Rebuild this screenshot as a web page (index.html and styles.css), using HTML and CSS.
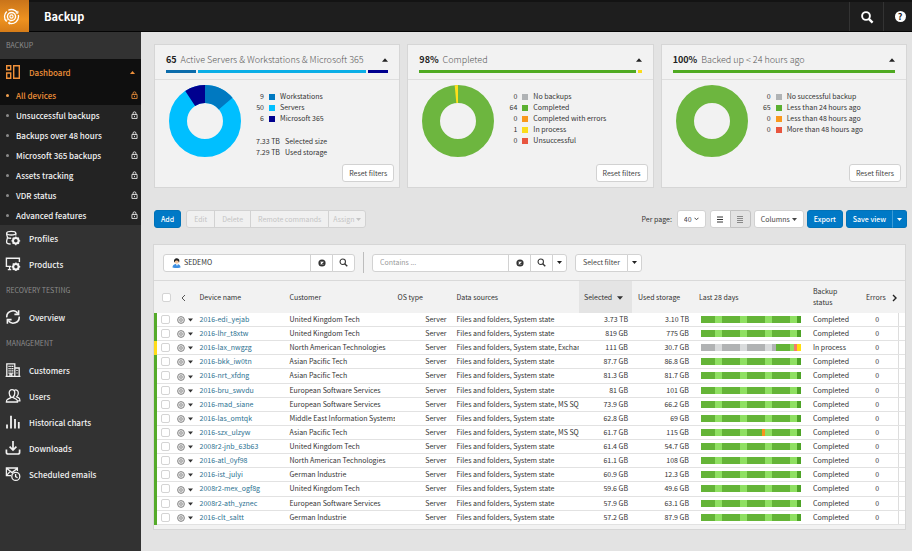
FILE: index.html
```html
<!DOCTYPE html>
<html lang="en">
<head>
<meta charset="UTF-8">
<meta name="viewport" content="width=device-width, initial-scale=1.0">
<title>Backup</title>
<link rel="stylesheet" href="styles.css">
</head>
<body>

<!-- Shared icons -->
<svg class="sprite" aria-hidden="true">
    <symbol id="lock" viewBox="0 0 12 14"><path d="M1.5 6h9v7h-9zM3.5 6V4a2.5 2.5 0 0 1 5 0v2M6 8.3v2.4" fill="none" stroke="currentColor" stroke-width="1.5"/></symbol>
    <symbol id="search" viewBox="0 0 12 12"><circle cx="5" cy="5" r="3.6" fill="none" stroke="currentColor" stroke-width="1.4"/><path d="M7.6 7.6l3.4 3.4" stroke="currentColor" stroke-width="1.8"/></symbol>
    <symbol id="clear" viewBox="0 0 12 12"><circle cx="6" cy="6" r="5.4" fill="currentColor"/><path d="M4 4l4 4M8 4l-4 4" stroke="#fff" stroke-width="1.7"/></symbol>
    <symbol id="down" viewBox="0 0 10 6"><path d="M0 0h10L5 6z" fill="currentColor"/></symbol>
    <symbol id="up" viewBox="0 0 10 6"><path d="M0 6h10L5 0z" fill="currentColor"/></symbol>
    <symbol id="gear" viewBox="0 0 16 16"><circle cx="8" cy="8" r="6.8" fill="#e4e4e4" stroke="#888" stroke-width="2"/><circle cx="8" cy="8" r="2.8" fill="#ccc" stroke="#999" stroke-width="1.6"/></symbol>
</svg>

<header class="topbar">
    <a class="logo" href="#" aria-label="Home">
        <svg viewBox="0 0 18 18" width="17" height="17" fill="none" stroke="#fff">
            <path d="M3.2 13.6A7.4 7.4 0 0 1 4 3.6M5.6 2.4A7.4 7.4 0 0 1 15.2 5M16.2 7.4A7.4 7.4 0 0 1 6 15.8" stroke-width="1.4"/>
            <path d="M1.6 12.2l1.9 2.2 1-2.6M13.4 5.2l2.5.4-.2-2.6M7.6 17.4l-2-1.6 2.2-1.3" stroke-width="1"/>
            <circle cx="9" cy="9" r="4.3" stroke-width="1.5"/>
            <circle cx="9" cy="9" r="1.7" stroke-width="1.2"/>
        </svg>
    </a>
    <h1>Backup</h1>
    <button class="top-button" aria-label="Search">
        <svg width="14" height="14" viewBox="0 0 14 14" fill="none" stroke="#fff"><circle cx="6" cy="6" r="3.9" stroke-width="1.9"/><path d="M8.8 8.8l3.8 3.8" stroke-width="2.4"/></svg>
    </button>
    <button class="top-button" aria-label="Help"><span class="help">?</span></button>
</header>

<div class="page">

<!-- Sidebar -->
<nav class="sidebar">
    <h2>BACKUP</h2>
    <div class="nav-open">
        <a class="nav-item" href="#">
            <svg width="16" height="16" viewBox="0 0 16 16" fill="none" stroke="currentColor" stroke-width="1.4"><path d="M1.7 1.7h4v4h-4zM1.7 9h4v5.3h-4zM8.7 1.7h5.6v12.6H8.7z"/></svg>
            <span>Dashboard</span>
            <svg class="nav-caret" width="5" height="3"><use href="#up"/></svg>
        </a>
        <a class="sub-item" href="#"><span>All devices</span><svg width="7" height="8"><use href="#lock"/></svg></a>
    </div>
    <div class="nav-sub">
        <a class="sub-item" href="#"><span>Unsuccessful backups</span><svg width="7" height="8"><use href="#lock"/></svg></a>
        <a class="sub-item" href="#"><span>Backups over 48 hours</span><svg width="7" height="8"><use href="#lock"/></svg></a>
        <a class="sub-item" href="#"><span>Microsoft 365 backups</span><svg width="7" height="8"><use href="#lock"/></svg></a>
        <a class="sub-item" href="#"><span>Assets tracking</span><svg width="7" height="8"><use href="#lock"/></svg></a>
        <a class="sub-item" href="#"><span>VDR status</span><svg width="7" height="8"><use href="#lock"/></svg></a>
        <a class="sub-item" href="#"><span>Advanced features</span><svg width="7" height="8"><use href="#lock"/></svg></a>
    </div>
    <a class="nav-item" href="#">
        <svg width="16" height="16" viewBox="0 0 16 16" fill="none" stroke="currentColor" stroke-width="1.3"><ellipse cx="6.2" cy="3.2" rx="4.6" ry="1.8"/><path d="M1.6 3.2c0 2.4.8 2.6.8 4.2S1.6 9.6 1.6 12c0 1.4 2 2 4 2M10.8 3.2v2.4M2.2 7.2c1 .9 2.4 1.2 4 1"/><circle cx="10.8" cy="10.8" r="2.8" stroke-width="2"/><path d="M10.8 6.4v1.4M10.8 13.8v1.4M6.4 10.8h1.4M13.8 10.8h1.4M7.7 7.7l1 1M12.9 12.9l1 1M7.7 13.9l1-1M12.9 8.7l1-1"/></svg>
        <span>Profiles</span>
    </a>
    <a class="nav-item" href="#">
        <svg width="16" height="16" viewBox="0 0 16 16" fill="none" stroke="currentColor" stroke-width="1.4"><path d="M6 10.4H1.4V2.2h13V6M2.8 13.6h3.4M4.6 10.6v3"/><circle cx="10.9" cy="10.7" r="2.7" stroke-width="2"/><path d="M10.9 6.4v1.4M10.9 13.6V15M6.6 10.7H8M13.8 10.7h1.4M7.8 7.6l1 1M13 12.8l1 1M7.8 13.8l1-1M13 8.6l1-1"/></svg>
        <span>Products</span>
    </a>
    <h2>RECOVERY TESTING</h2>
    <a class="nav-item" href="#">
        <svg width="16" height="16" viewBox="0 0 16 16" fill="none" stroke="currentColor" stroke-width="1.6"><path d="M1.8 8.4A6 6 0 0 1 12.8 4.6M14.2 7.6A6 6 0 0 1 3.2 11.4"/><path d="M13.6 1.2v4.2H9.4M2.4 14.8v-4.2h4.2"/></svg>
        <span>Overview</span>
    </a>
    <h2>MANAGEMENT</h2>
    <a class="nav-item" href="#">
        <svg width="16" height="16" viewBox="0 0 16 16" fill="none" stroke="currentColor" stroke-width="1.3"><path d="M1.8 14V1.8h8V14M9.8 6h4.4v8M.6 14.3h14.8"/><path d="M3.4 4.3h5M3.4 6.6h5M3.4 8.9h5M3.4 11.2h5" stroke-dasharray="1.4 .4"/><path d="M12 8v1M12 10.4v1M5 14v-2h1.8v2"/></svg>
        <span>Customers</span>
    </a>
    <a class="nav-item" href="#">
        <svg width="16" height="16" viewBox="0 0 16 16" fill="none" stroke="currentColor" stroke-width="1.3"><path d="M6.3 9.4C4.6 8.2 4.2 6.6 4.2 5c0-2 1-3.4 2.8-3.4S9.8 3 9.8 5c0 1.6-.4 3.2-2.1 4.4l3.6 1.9c.9.5 1.2 1.3 1.2 2.7H1.4c0-1.4.3-2.2 1.2-2.7zM9.6 2.1c2.2-.8 3.7.6 3.7 2.9 0 1.6-.5 2.9-1.6 3.8l2 1.1c.9.5 1.2 1.4 1.2 2.9h-2"/></svg>
        <span>Users</span>
    </a>
    <a class="nav-item" href="#">
        <svg width="16" height="16" viewBox="0 0 16 16" fill="none" stroke="currentColor" stroke-width="1.8"><path d="M2 14.4v-4M6 14.4V1.8M10 14.4V5M13.8 14.4V8"/></svg>
        <span>Historical charts</span>
    </a>
    <a class="nav-item" href="#">
        <svg width="16" height="16" viewBox="0 0 16 16" fill="none" stroke="currentColor" stroke-width="1.7"><path d="M8 1v8.6M4.6 6.600L8 10l3.4-3.4M1.4 9.6v2.6c0 1.2.6 1.8 1.8 1.8h9.6c1.2 0 1.8-.6 1.8-1.8V9.6"/></svg>
        <span>Downloads</span>
    </a>
    <a class="nav-item" href="#">
        <svg width="16" height="16" viewBox="0 0 16 16" fill="none" stroke="currentColor" stroke-width="1.3"><path d="M6 9.6H1.4V2h11v3M1.6 2.2L7 6.6l5.2-4.2M1.6 9.4l3.6-4"/><circle cx="10.8" cy="10.4" r="4"/><path d="M10.6 8v2.6l2 1.2"/></svg>
        <span>Scheduled emails</span>
    </a>
</nav>

<main>

    <!-- Summary cards -->
    <section class="cards">
        <article class="card">
            <div class="card-head">
                <h3><b>65</b> Active Servers &amp; Workstations &amp; Microsoft 365</h3>
                <button class="collapse" aria-label="Collapse"><svg width="6" height="4"><use href="#up"/></svg></button>
                <div class="share">
                    <i class="work-dark" style="flex-grow: 30"></i><i class="serv-dark" style="flex-grow: 169"></i><i class="ms" style="flex-grow: 20"></i>
                </div>
            </div>
            <div class="card-body">
                <svg class="donut" viewBox="0 0 72 72" width="72" height="72">
                    <circle cx="36" cy="36" r="27" pathLength="65" stroke="#00bfff"/>
                    <circle cx="36" cy="36" r="27" pathLength="65" stroke="#0079c1" stroke-dasharray="9 56"/>
                    <circle cx="36" cy="36" r="27" pathLength="65" stroke="#00008f" stroke-dasharray="6 59" stroke-dashoffset="-59"/>
                </svg>
                <div>
                    <ul class="legend">
                        <li><b>9</b><i class="work"></i>Workstations</li>
                        <li><b>50</b><i class="serv"></i>Servers</li>
                        <li><b>6</b><i class="ms"></i>Microsoft 365</li>
                    </ul>
                    <ul class="sizes">
                        <li><b>7.33 TB</b>Selected size</li>
                        <li><b>7.29 TB</b>Used storage</li>
                    </ul>
                </div>
            </div>
            <button class="btn reset">Reset filters</button>
        </article>

        <article class="card">
            <div class="card-head">
                <h3><b>98%</b> Completed</h3>
                <button class="collapse" aria-label="Collapse"><svg width="6" height="4"><use href="#up"/></svg></button>
                <div class="share">
                    <i class="ok-dark" style="flex-grow: 218"></i><i class="proc" style="flex-grow: 4"></i>
                </div>
            </div>
            <div class="card-body">
                <svg class="donut" viewBox="0 0 72 72" width="72" height="72">
                    <circle cx="36" cy="36" r="27" pathLength="65" stroke="#6db63f"/>
                    <circle cx="36" cy="36" r="27" pathLength="65" stroke="#ffe01a" stroke-dasharray="1 64" stroke-dashoffset="-64"/>
                </svg>
                <ul class="legend">
                    <li><b>0</b><i class="none"></i>No backups</li>
                    <li><b>64</b><i class="ok"></i>Completed</li>
                    <li><b>0</b><i class="warn"></i>Completed with errors</li>
                    <li><b>1</b><i class="proc"></i>In process</li>
                    <li><b>0</b><i class="fail"></i>Unsuccessful</li>
                </ul>
            </div>
            <button class="btn reset">Reset filters</button>
        </article>

        <article class="card">
            <div class="card-head">
                <h3><b>100%</b> Backed up &lt; 24 hours ago</h3>
                <button class="collapse" aria-label="Collapse"><svg width="6" height="4"><use href="#up"/></svg></button>
                <div class="share"><i class="ok-dark" style="flex-grow: 1"></i></div>
            </div>
            <div class="card-body">
                <svg class="donut" viewBox="0 0 72 72" width="72" height="72">
                    <circle cx="36" cy="36" r="27" stroke="#6db63f"/>
                </svg>
                <ul class="legend">
                    <li><b>0</b><i class="none"></i>No successful backup</li>
                    <li><b>65</b><i class="ok"></i>Less than 24 hours ago</li>
                    <li><b>0</b><i class="warn"></i>Less than 48 hours ago</li>
                    <li><b>0</b><i class="fail"></i>More than 48 hours ago</li>
                </ul>
            </div>
            <button class="btn reset">Reset filters</button>
        </article>
    </section>

    <!-- Toolbar -->
    <section class="toolbar">
        <button class="btn primary">Add</button>
        <div class="group actions">
            <button class="btn" disabled>Edit</button>
            <button class="btn" disabled>Delete</button>
            <button class="btn" disabled>Remote commands</button>
            <button class="btn assign" disabled>Assign <svg width="5" height="3"><use href="#down"/></svg></button>
        </div>
        <label class="per-label" for="perPage">Per page:</label>
        <div class="btn per-page">
            <select id="perPage"><option>40</option></select>
            <svg width="5" height="4" viewBox="0 0 10 8"><path d="M1 1.5l4 4 4-4" fill="none" stroke="currentColor" stroke-width="2"/></svg>
        </div>
        <div class="group">
            <button class="btn view" aria-label="List view"><svg width="6" height="7" viewBox="0 0 6 7"><path d="M0 1h6M0 3.5h6M0 6h6" stroke="#333"/></svg></button>
            <button class="btn view active" aria-label="Compact view"><svg width="6" height="7" viewBox="0 0 6 7"><path d="M0 .5h6M0 2.5h6M0 4.5h6M0 6.5h6" stroke="#888"/></svg></button>
        </div>
        <button class="btn columns">Columns <svg width="5" height="3"><use href="#down"/></svg></button>
        <button class="btn primary">Export</button>
        <div class="group">
            <button class="btn primary">Save view</button>
            <button class="btn primary arrow" aria-label="More save options"><svg width="5" height="3"><use href="#down"/></svg></button>
        </div>
    </section>

    <!-- Device list -->
    <section class="panel">
        <div class="filters">
            <div class="group">
                <div class="field">
                    <svg width="9" height="10" viewBox="0 0 18 20"><circle cx="9.5" cy="7" r="4.5" fill="#f6c9a2"/><path d="M4 8C3 2 7 0 10 .5c4 .3 6 4 4 9-.5-3-2-4-4-4.5C7 5 6 6 5 9z" fill="#222"/><path d="M1 19c0-4 2-6 6-7h4c4 1 6 3 6 7-4 1.5-12 1.5-16 0z" fill="#3f8fe0"/><path d="M8 12h4l-2 4z" fill="#fff"/></svg>
                    <input type="text" aria-label="Partner" value="SEDEMO">
                </div>
                <button class="btn icon" aria-label="Clear partner"><svg width="8" height="8"><use href="#clear"/></svg></button>
                <button class="btn icon" aria-label="Find partner"><svg width="9" height="9"><use href="#search"/></svg></button>
            </div>
            <div class="divider"></div>
            <div class="group">
                <div class="field contains">
                    <input type="text" aria-label="Contains" placeholder="Contains ...">
                </div>
                <button class="btn icon" aria-label="Clear search"><svg width="8" height="8"><use href="#clear"/></svg></button>
                <button class="btn icon" aria-label="Search devices"><svg width="9" height="9"><use href="#search"/></svg></button>
                <button class="btn arrow" aria-label="Search options"><svg width="5" height="3"><use href="#down"/></svg></button>
            </div>
            <div class="group select-filter">
                <button class="btn">Select filter</button>
                <button class="btn arrow" aria-label="Filter list"><svg width="5" height="3"><use href="#down"/></svg></button>
            </div>
        </div>

        <table>
            <colgroup>
                <col class="c-check"><col class="c-gear"><col class="c-name"><col class="c-customer"><col class="c-os"><col>
                <col class="c-selected"><col class="c-used"><col class="c-days"><col class="c-status"><col class="c-errors"><col class="c-end">
            </colgroup>
            <thead>
                <tr>
                    <th class="check"><input type="checkbox" aria-label="Select all"></th>
                    <th class="gear"><svg width="5" height="8" viewBox="0 0 5 8"><path d="M4 1L1 4l3 3" fill="none" stroke="#555"/></svg></th>
                    <th>Device name</th>
                    <th>Customer</th>
                    <th>OS type</th>
                    <th class="sources">Data sources</th>
                    <th class="sorted">Selected <svg width="6" height="4"><use href="#down"/></svg></th>
                    <th class="used">Used storage</th>
                    <th class="days">Last 28 days</th>
                    <th class="status">Backup status</th>
                    <th class="errors" colspan="2">Errors <svg width="5" height="8" viewBox="0 0 5 8"><path d="M1 1l3 3-3 3" fill="none" stroke="#222" stroke-width="1.4"/></svg></th>
                </tr>
            </thead>
            <tbody id="devices"></tbody>
        </table>
    </section>

</main>
</div>

<script>
    // g/l = completed (weekday/weekend), d = today, n/m = no backup, w = with errors, f = failed, p = in process
    const normal = [['g', 4], ['l', 2], ['g', 5], ['l', 2], ['g', 5], ['l', 2], ['g', 5], ['l', 2], ['d', 1]];
    const started = [['n', 4], ['m', 2], ['n', 5], ['m', 2], ['n', 5], ['m', 2], ['n', 1], ['g', 4], ['l', 1], ['f', 1], ['p', 1]];
    const warned = [['g', 4], ['l', 2], ['g', 5], ['l', 2], ['g', 4], ['w', 1], ['l', 2], ['g', 5], ['l', 2], ['d', 1]];
    const files = 'Files and folders, System state';

    const devices = [
        ['2016-edi_yejab', 'United Kingdom Tech', files, '3.73 TB', '3.10 TB', normal],
        ['2016-lhr_t8xtw', 'United Kingdom Tech', files, '819 GB', '775 GB', normal],
        ['2016-lax_nwgzg', 'North American Technologies', files + ', Exchange', '111 GB', '30.7 GB', started],
        ['2016-bkk_iw0tn', 'Asian Pacific Tech', files, '87.7 GB', '86.8 GB', normal],
        ['2016-nrt_xfdng', 'Asian Pacific Tech', files, '81.3 GB', '81.7 GB', normal],
        ['2016-bru_swvdu', 'European Software Services', files, '81 GB', '101 GB', normal],
        ['2016-mad_siane', 'European Software Services', files + ', MS SQL', '73.9 GB', '66.2 GB', normal],
        ['2016-las_omtqk', 'Middle East Information Systems', files, '62.8 GB', '69 GB', normal],
        ['2016-szx_ulzyw', 'Asian Pacific Tech', files + ', MS SQL', '61.7 GB', '115 GB', warned],
        ['2008r2-jnb_63b63', 'United Kingdom Tech', files, '61.4 GB', '54.7 GB', normal],
        ['2016-atl_0yf98', 'North American Technologies', files, '61.1 GB', '108 GB', normal],
        ['2016-ist_julyi', 'German Industrie', files, '60.9 GB', '12.3 GB', normal],
        ['2008r2-mex_ogf8g', 'United Kingdom Tech', files, '59.6 GB', '49.6 GB', normal],
        ['2008r2-ath_yznec', 'European Software Services', files, '57.9 GB', '63.1 GB', normal],
        ['2016-clt_saltt', 'German Industrie', files, '57.2 GB', '87.9 GB', normal]
    ];

    document.getElementById('devices').innerHTML = devices.map(([name, customer, sources, selected, used, days]) => {
        const running = days === started;
        const bar = days.map(([kind, n]) => `<i class="day-${kind}" style="flex-grow: ${n}"></i>`).join('');
        return `<tr class="${running ? 'running' : ''}">
            <td class="check"><input type="checkbox" aria-label="${name}"></td>
            <td class="gear"><svg width="8" height="8"><use href="#gear"/></svg><svg class="caret" width="5" height="4"><use href="#down"/></svg></td>
            <td><a href="#">${name}</a></td>
            <td>${customer}</td>
            <td class="num">Server</td>
            <td class="sources">${sources}</td>
            <td class="num">${selected}</td>
            <td class="num used">${used}</td>
            <td class="days"><div class="bar">${bar}</div></td>
            <td class="status">${running ? 'In process' : 'Completed'}</td>
            <td class="errors">0</td>
            <td class="end"></td>
        </tr>`;
    }).join('');
</script>
</body>
</html>
```
FILE: styles.css
```css
* {
    box-sizing: border-box;
}
body {
    margin: 0;
    min-height: 100vh;
    display: flex;
    flex-direction: column;
    font-family: "Noto Sans CJK SC", "Open Sans", sans-serif;
    font-size: 7px;
    line-height: 11px;
    color: #333;
    background-color: #e3e3e3;
}
h1, h2, h3, ul {
    margin: 0;
    padding: 0;
}
ul {
    list-style: none;
}
a {
    text-decoration: none;
}
button, input, select {
    font: inherit;
    color: inherit;
    margin: 0;
}
button {
    cursor: pointer;
}
.sprite {
    display: none;
}

/* TOP BAR */
.topbar {
    display: flex;
    align-items: stretch;
    height: 32px;
    background-color: #1e1e1e;
    border-top: 2px solid #131313;
    border-bottom: 1px solid #050505;
    color: #fff;
}
.logo {
    width: 29px;
    margin-top: -2px;
    margin-bottom: -1px;
    display: flex;
    align-items: center;
    padding-left: 3px;
    background: linear-gradient(#c9741a, #ee9220 60%, #d67c18);
}
.topbar h1 {
    flex: 1;
    padding-left: 15px;
    font-size: 11px;
    line-height: 28px;
}
.top-button {
    width: 34px;
    padding: 0;
    border: 0;
    border-left: 1px solid #333;
    background: none;
    display: flex;
    align-items: center;
    justify-content: center;
}
.top-button:last-child {
    width: 29px;
}
.help {
    width: 11px;
    height: 11px;
    margin-left: 4px;
    border-radius: 50%;
    background-color: #fff;
    color: #1e1e1e;
    font-size: 9px;
    font-weight: bold;
    line-height: 11px;
}

/* SIDEBAR */
.page {
    flex: 1;
    display: flex;
}
.sidebar {
    width: 141px;
    flex-shrink: 0;
    background-color: #323232;
    color: #f2f2f2;
    font-size: 8px;
    font-weight: 500;
}
.sidebar h2 {
    padding-left: 6px;
    font-size: 7px;
    font-weight: normal;
    line-height: 27px;
    color: #8c8c8c;
}
.nav-item,
.sub-item {
    display: flex;
    align-items: center;
    color: inherit;
}
.nav-item {
    height: 26px;
    padding: 0 6px 0 5px;
    gap: 8px;
}
.nav-item span,
.sub-item span {
    flex: 1;
}
.nav-open {
    background-color: #0f0f0f;
    color: #f0913a;
}
.nav-sub {
    background-color: #232323;
}
.sub-item {
    height: 20px;
    padding: 0 3px 0 6px;
}
.sub-item::before {
    content: "";
    width: 3px;
    height: 3px;
    margin-right: 7px;
    border-radius: 50%;
    background-color: #8a8a8a;
}
.nav-open .sub-item::before {
    background-color: #f0a050;
}

/* MAIN */
main {
    flex: 1;
    min-width: 0;
    padding: 12px 5px 20px 13px;
}

/* CARDS */
.cards {
    display: grid;
    grid-template-columns: repeat(3, 1fr);
    gap: 7px;
}
.card {
    display: flex;
    flex-direction: column;
    height: 144px;
    background-color: #f2f2f2;
    border: 1px solid #d6d6d6;
}
.card-head {
    display: grid;
    grid-template-columns: 1fr auto;
    padding: 7px 11px 6px;
    border-bottom: 1px solid #dedede;
}
.card h3 {
    font-size: 9px;
    font-weight: 300;
    line-height: 15px;
    color: #555;
}
.card h3 b {
    margin-right: 2px;
    font-weight: bold;
    color: #222;
}
.collapse {
    padding: 0;
    border: 0;
    background: none;
    color: #222;
    display: flex;
    align-items: center;
}
.share {
    grid-column: 1 / 3;
    display: flex;
    gap: 2px;
    height: 3px;
    margin-top: 3px;
}
.card-body {
    flex: 1;
    display: flex;
    gap: 15px;
    padding: 5px 14px 0;
}
.donut circle {
    fill: none;
    stroke-width: 18px;
}
.donut {
    transform: rotate(-90deg);
}
.legend {
    padding-top: 6px;
}
.legend li,
.sizes li {
    display: flex;
    align-items: center;
}
.legend b,
.sizes b {
    font-weight: normal;
}
.legend b {
    width: 8px;
    display: flex;
    justify-content: flex-end;
}
.legend i {
    width: 6px;
    height: 6px;
    margin: 0 5px;
}
.sizes {
    padding-top: 12px;
}
.sizes b {
    margin-right: 5px;
}
.reset {
    align-self: flex-end;
    margin: 0 5px 5px 0;
}

/* STATUS COLOURS */
.work { background-color: #0079c1; }
.work-dark { background-color: #0b6cab; }
.serv { background-color: #00bfff; }
.serv-dark { background-color: #0aaee6; }
.ms { background-color: #00008f; }
.none { background-color: #b0b3b5; }
.ok { background-color: #5bb031; }
.ok-dark { background-color: #4faa22; }
.warn { background-color: #f8981d; }
.proc { background-color: #fbdc1c; }
.fail { background-color: #e8553f; }

/* BUTTONS */
.btn {
    display: flex;
    align-items: center;
    justify-content: center;
    gap: 2px;
    height: 18px;
    padding: 0 6px;
    border: 1px solid #d2d2d2;
    border-radius: 3px;
    background-color: #fff;
    color: #444;
    white-space: nowrap;
}
.btn:disabled {
    background-color: #f0f0f0;
    color: #c4c4c4;
}
.btn.primary {
    border-color: #0072b8;
    background-color: #0079c6;
    color: #fff;
    font-weight: 500;
}
.group {
    display: flex;
}
.group > * {
    border-radius: 0;
}
.group > * + * {
    margin-left: -1px;
}
.group > :first-child {
    border-radius: 3px 0 0 3px;
}
.group > :last-child {
    border-radius: 0 3px 3px 0;
}
.btn.arrow {
    width: 15px;
    padding: 0;
}
.primary + .btn.primary {
    border-left-color: #3c9bd6;
}

/* TOOLBAR */
.toolbar {
    display: flex;
    align-items: center;
    gap: 3px;
    padding: 22px 0 17px;
}
.actions {
    margin-left: 2px;
}
.actions .btn {
    padding: 0 7px;
}
.actions .assign {
    padding: 0 4px;
}
.per-label {
    margin-left: auto;
    margin-right: 2px;
}
.per-page {
    margin-right: 1px;
}
.per-page select {
    appearance: none;
    padding: 0;
    border: 0;
    background: none;
}
.btn.view {
    width: 21px;
    padding: 0;
}
.view.active {
    background-color: #e3e3e3;
    border-color: #c2c2c2;
}

/* DEVICE PANEL */
.panel {
    margin-right: 2px;
    background-color: #f2f2f2;
    box-shadow: 0 0 0 1px #d6d6d6;
    padding-bottom: 4px;
}
.filters {
    display: flex;
    align-items: center;
    height: 36px;
    padding-left: 9px;
    border-bottom: 1px solid #d9d9d9;
}
.field {
    display: flex;
    align-items: center;
    width: 148px;
    height: 18px;
    padding: 0 8px;
    gap: 3px;
    border: 1px solid #d2d2d2;
    background-color: #fff;
}
.field.contains {
    width: 137px;
    padding: 0 7px;
}
.field input {
    flex: 1;
    min-width: 0;
    padding: 0;
    border: 0;
    outline: 0;
    background: none;
}
.field input::placeholder {
    color: #999;
}
.btn.icon {
    width: 23px;
    padding: 0;
    color: #333;
}
.filters .arrow {
    color: #222;
}
.divider {
    width: 1px;
    height: 21px;
    margin: 0 8px;
    background-color: #bdbdbd;
}
.select-filter {
    margin-left: 8px;
}
.select-filter .btn:first-child {
    padding: 0 7px;
}

/* DEVICE TABLE */
table {
    width: 100%;
    height: 244px;
    table-layout: fixed;
    border-collapse: collapse;
}
.c-check { width: 19px; }
.c-gear { width: 22px; }
.c-name { width: 90px; }
.c-customer { width: 108px; }
.c-os { width: 56px; }
.c-selected { width: 53px; }
.c-used { width: 62px; }
.c-days { width: 114px; }
.c-status { width: 48px; }
.c-errors { width: 43px; }
.c-end { width: 6px; }
th, td {
    padding: 0 0 0 3px;
    text-align: left;
    white-space: nowrap;
    overflow: hidden;
}
th {
    height: 32px;
    font-weight: normal;
}
td {
    background-color: #fff;
    border-bottom: 1px solid #e2e2e2;
}
td a {
    color: #2a7090;
}
.check {
    padding-left: 6px;
}
td.check {
    padding-left: 4px;
    border-left: 3px solid #55ab2a;
}
.running td.check {
    border-left-color: #ffdc1a;
}
.check input {
    appearance: none;
    display: block;
    width: 9px;
    height: 9px;
    border: 1px solid #d4d4d4;
    border-radius: 2px;
    background-color: #fff;
}
.gear {
    padding-left: 2px;
}
th.gear {
    padding-left: 6px;
}
.gear svg {
    vertical-align: middle;
}
.gear .caret {
    margin-left: 3px;
}
.num {
    padding-right: 4px;
    text-align: right;
}
.sources {
    padding-left: 6px;
}
.sorted {
    padding-left: 5px;
    background-color: #e4e4e4;
}
.sorted svg {
    margin-left: 3px;
}
th.used {
    padding-left: 6px;
}
td.used {
    padding-right: 5px;
}
.days {
    padding: 0 7px;
}
th.days {
    padding-left: 5px;
}
.bar {
    display: flex;
    height: 7px;
}
.status {
    padding-left: 5px;
}
th.status {
    padding-right: 14px;
    white-space: normal;
}
td.errors {
    padding: 0;
    text-align: center;
}
th.errors {
    padding-left: 10px;
}
.errors svg {
    margin-left: 5px;
    vertical-align: middle;
}
td.end {
    padding: 0;
    border-left: 1px solid #ddd;
}
.day-g { background-color: #64b437; }
.day-d { background-color: #4da326; }
.day-l { background-color: #8fe062; }
.day-n { background-color: #b1b3b4; }
.day-m { background-color: #d9dbdc; }
.day-w { background-color: #f8941d; }
.day-f { background-color: #f47b6a; }
.day-p { background-color: #ffdf0f; }
```
